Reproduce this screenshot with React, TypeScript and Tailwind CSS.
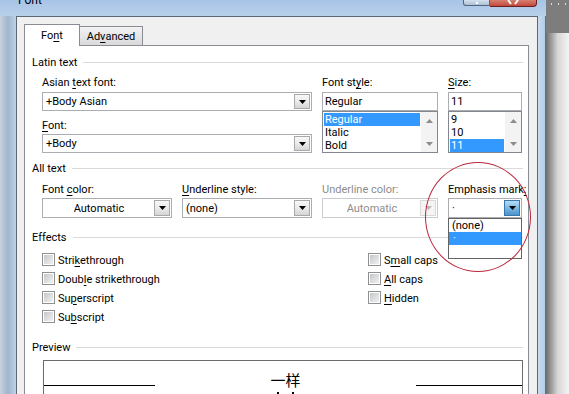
import type { ReactNode } from 'react';

function U({ children }: { children: ReactNode }) {
  return <span className="underline decoration-1 underline-offset-2">{children}</span>;
}

function Arrow({ up = false, color = '#000000' }: { up?: boolean; color?: string }) {
  return (
    <svg width="7" height="4" viewBox="0 0 7 4">
      <path d={up ? 'M0 4h7L3.5 0z' : 'M0 0h7L3.5 4z'} fill={color} />
    </svg>
  );
}

type Variant = 'normal' | 'disabled' | 'active';

function DropButton({ variant = 'normal' }: { variant?: Variant }) {
  const cls =
    variant === 'active'
      ? 'border-[#3a76a8] bg-linear-to-b from-[#b6dcf6] via-[#7bb8e6] to-[#4b94cc]'
      : variant === 'disabled'
        ? 'border-[#dadada] bg-[#f4f4f4]'
        : 'border-[#a9a9a9] bg-linear-to-b from-[#f8f8f8] via-[#ebebeb] to-[#d5d5d5]';
  return (
    <div className={`flex w-[16px] shrink-0 items-center justify-center border ${cls}`}>
      <Arrow color={variant === 'disabled' ? '#b9b9b9' : '#000000'} />
    </div>
  );
}

function Combo({
  value,
  className = '',
  center = false,
  variant = 'normal',
}: {
  value: string;
  className?: string;
  center?: boolean;
  variant?: Variant;
}) {
  const border = variant === 'disabled' ? 'border-[#c9cbcf]' : 'border-[#abadb3]';
  const text = variant === 'disabled' ? 'text-[#8d8d8d]' : 'text-black';
  return (
    <div className={`flex border bg-white p-px ${border} ${className}`}>
      <div className={`flex flex-1 items-center leading-[15px] ${center ? 'justify-center' : 'pl-[2px]'} ${text}`}>
        {value}
      </div>
      <DropButton variant={variant} />
    </div>
  );
}

function Label({ children, className = '', muted = false }: { children: ReactNode; className?: string; muted?: boolean }) {
  return (
    <div className={`h-[15px] shrink-0 whitespace-nowrap pt-px leading-[14px] ${muted ? 'text-[#8d8d8d]' : ''} ${className}`}>
      {children}
    </div>
  );
}

function TextBox({ value }: { value: string }) {
  return (
    <div className="mt-[2px] flex h-[19px] items-center border border-[#abadb3] bg-white pl-[2px]">{value}</div>
  );
}

function ListBox({ items, selected, selWidth }: { items: string[]; selected: number; selWidth: string }) {
  return (
    <div className="flex h-[42px] border border-[#828790] bg-white">
      <div className="flex flex-col p-px">
        {items.map((item, i) => (
          <div
            key={item}
            className={`h-[13px] pl-px leading-[13px] ${selWidth} ${i === selected ? 'bg-[#3399ff] text-white' : ''}`}
          >
            {item}
          </div>
        ))}
      </div>
      <div className="flex w-[17px] flex-col justify-between bg-[#f3f3f3]">
        <div className="flex h-[17px] items-center justify-center">
          <Arrow up color="#8c8c8c" />
        </div>
        <div className="flex h-[17px] items-center justify-center">
          <Arrow color="#8c8c8c" />
        </div>
      </div>
    </div>
  );
}

function Group({ title, className = '' }: { title: string; className?: string }) {
  return (
    <div className={`flex h-[16px] shrink-0 items-center gap-[6px] ${className}`}>
      <span className="pt-px leading-[16px]">{title}</span>
      <div className="h-px flex-1 bg-[#dadada]" />
    </div>
  );
}

function Check({ children }: { children: ReactNode }) {
  return (
    <div className="flex h-[19px] items-center gap-[3px]">
      <div className="h-[13px] w-[13px] border border-[#8e8f8f] bg-white p-px">
        <div className="h-full w-full bg-linear-to-br from-[#c4c7cb] to-[#f1f1f1]" />
      </div>
      <span className="pt-px leading-[15px]">{children}</span>
    </div>
  );
}

function EmphasisChar({ ch }: { ch: string }) {
  return (
    <div className="flex flex-col items-center">
      <span className="text-[15px] leading-[17px]">{ch}</span>
      <span className="mt-[4px] h-[2px] w-[2px] bg-black" />
    </div>
  );
}

export default function App() {
  return (
    <div className="relative flex h-[394px] w-[569px] overflow-hidden bg-[#ececec] font-['Roboto',sans-serif] text-[11px] leading-[15px] text-black">
      {/* dialog window */}
      <div className="flex w-[546px] shrink-0 flex-col">
        <div className="flex h-[16px] shrink-0 items-start justify-between bg-linear-to-b from-[#a7c4e6] to-[#b9d0ea] pl-[18px] pr-[9px]">
          <span className="-mt-[7px] text-[12px] leading-[15px]">Font</span>
          <div className="flex">
            <div className="flex h-[6px] w-[27px] justify-center rounded-bl-[3px] border border-t-0 border-[#52657c] bg-linear-to-b from-[#d4e1ee] to-[#aec1d7]">
              <div className="mt-[2px] h-[2px] w-[2px] bg-white" />
            </div>
            <div className="flex h-[7px] w-[47px] justify-center rounded-br-[4px] border border-l-0 border-t-0 border-[#6a2020] bg-linear-to-b from-[#d77f70] to-[#c2463b]">
              <svg width="12" height="6" viewBox="0 0 12 6">
                <path d="M1 0l3 4M11 0l-3 4" stroke="#ffffff" strokeWidth="2" />
              </svg>
            </div>
          </div>
        </div>

        <div className="flex min-h-0 flex-1">
          <div className="w-[16px] shrink-0 bg-linear-to-r from-[#c7d2dd] via-[#9fb5cd] to-[#bdd2e9]" />

          {/* client area */}
          <div className="flex w-[522px] shrink-0 flex-col border-x border-t border-[#5b6876] bg-[#f0f0f0] pl-[7px] pr-[8px] pt-[7px]">
            {/* tabs */}
            <div className="flex h-[21px] shrink-0 items-end">
              <div className="relative z-10 -mb-px flex h-[22px] w-[56px] items-center justify-center border-x border-t border-[#898c95] bg-white">
                Fo<U>n</U>t
              </div>
              <div className="-ml-px flex h-[19px] w-[64px] items-center justify-center border-x border-t border-[#898c95] bg-linear-to-b from-[#f3f3f3] via-[#e6e6e6] to-[#d9d9d9] pt-px">
                Ad<U>v</U>anced
              </div>
            </div>

            {/* tab panel */}
            <div className="flex min-h-0 flex-1 flex-col overflow-hidden border border-b-0 border-[#898c95] bg-white pl-[7px] pr-[5px] pt-[8px]">
              <Group title="Latin text" />
              <div className="mt-[5px] flex shrink-0 gap-[10px] pl-[10px]">
                <div className="flex w-[270px] flex-col">
                  <Label>
                    Asian <U>t</U>ext font:
                  </Label>
                  <Combo className="mt-[2px] h-[19px]" value="+Body Asian" />
                  <Label className="mt-[7px]">
                    <U>F</U>ont:
                  </Label>
                  <Combo className="mt-px h-[19px]" value="+Body" />
                </div>
                <div className="flex w-[116px] flex-col">
                  <Label>
                    Font st<U>y</U>le:
                  </Label>
                  <TextBox value="Regular" />
                  <ListBox items={['Regular', 'Italic', 'Bold']} selected={0} selWidth="w-[96px]" />
                </div>
                <div className="flex w-[74px] flex-col">
                  <Label>
                    <U>S</U>ize:
                  </Label>
                  <TextBox value="11" />
                  <ListBox items={['9', '10', '11']} selected={2} selWidth="w-[54px]" />
                </div>
              </div>

              <Group className="mt-[7px]" title="All text" />
              <div className="mt-[6px] flex shrink-0 gap-[10px] pl-[10px]">
                <div className="flex w-[130px] flex-col">
                  <Label>
                    Font <U>c</U>olor:
                  </Label>
                  <Combo className="mt-px h-[20px]" value="Automatic" center />
                </div>
                <div className="flex w-[130px] flex-col">
                  <Label>
                    <U>U</U>nderline style:
                  </Label>
                  <Combo className="mt-px h-[20px]" value="(none)" />
                </div>
                <div className="flex w-[116px] flex-col">
                  <Label muted>Underline color:</Label>
                  <Combo className="mt-px h-[20px]" value="Automatic" center variant="disabled" />
                </div>
                <div className="flex w-[74px] flex-col">
                  <Label>
                    Emphasis mark<U>:</U>
                  </Label>
                  <div className="relative mt-px">
                    <Combo className="h-[20px] border-[#7a7a7a]" value="·" variant="active" />
                    <div className="absolute left-0 top-[20px] z-10 flex h-[41px] w-[74px] flex-col border border-[#646464] bg-white">
                      <div className="h-[13px] pl-[3px] leading-[13px]">(none)</div>
                      <div className="h-[13px] bg-[#3399ff] pl-[4px] leading-[13px] text-white">·</div>
                      <div className="h-[13px]" />
                    </div>
                  </div>
                </div>
              </div>

              <Group className="mt-[11px]" title="Effects" />
              <div className="mt-[5px] grid shrink-0 grid-cols-[326px_1fr] pl-[10px]">
                <div className="flex flex-col">
                  <Check>
                    Stri<U>k</U>ethrough
                  </Check>
                  <Check>
                    Doub<U>l</U>e strikethrough
                  </Check>
                  <Check>
                    Su<U>p</U>erscript
                  </Check>
                  <Check>
                    Su<U>b</U>script
                  </Check>
                </div>
                <div className="flex flex-col">
                  <Check>
                    S<U>m</U>all caps
                  </Check>
                  <Check>
                    <U>A</U>ll caps
                  </Check>
                  <Check>
                    <U>H</U>idden
                  </Check>
                </div>
              </div>

              <Group className="mt-[13px]" title="Preview" />
              <div className="ml-[11px] mt-[5px] flex h-[60px] shrink-0 border border-[#6b6b6b] bg-white">
                <div className="w-[111px] shrink-0">
                  <div className="mt-[24px] h-px bg-black" />
                </div>
                <div className="flex flex-1 justify-center pt-[10px] font-['Noto_Sans_CJK_SC',sans-serif]">
                  <EmphasisChar ch="一" />
                  <EmphasisChar ch="样" />
                </div>
                <div className="w-[106px] shrink-0">
                  <div className="mt-[24px] h-px bg-black" />
                </div>
              </div>
            </div>
          </div>

          <div className="w-[8px] shrink-0 border-r border-[#5f7185] bg-linear-to-r from-[#c8dcf1] to-[#b3cce8]" />
        </div>
      </div>

      {/* desktop behind the dialog */}
      <div className="flex flex-1 flex-col">
        <div className="flex h-[33px] shrink-0 items-start gap-[6px] bg-[#7d7d7d] pl-[5px] pt-[3px]">
          <span className="h-[2px] w-px bg-[#e0e0e0]" />
          <span className="h-[2px] w-px bg-[#e0e0e0]" />
          <span className="h-[2px] w-px bg-[#e0e0e0]" />
        </div>
        <div className="flex-1 bg-linear-to-r from-[#6f6f6f] via-[#d6d6d6] to-[#f4f4f4]" />
      </div>

      {/* red annotation circle */}
      <div className="pointer-events-none absolute left-[425px] top-[162px] z-20 h-[110px] w-[106px] rounded-[50%] border border-[#b8283c]" />
    </div>
  );
}
